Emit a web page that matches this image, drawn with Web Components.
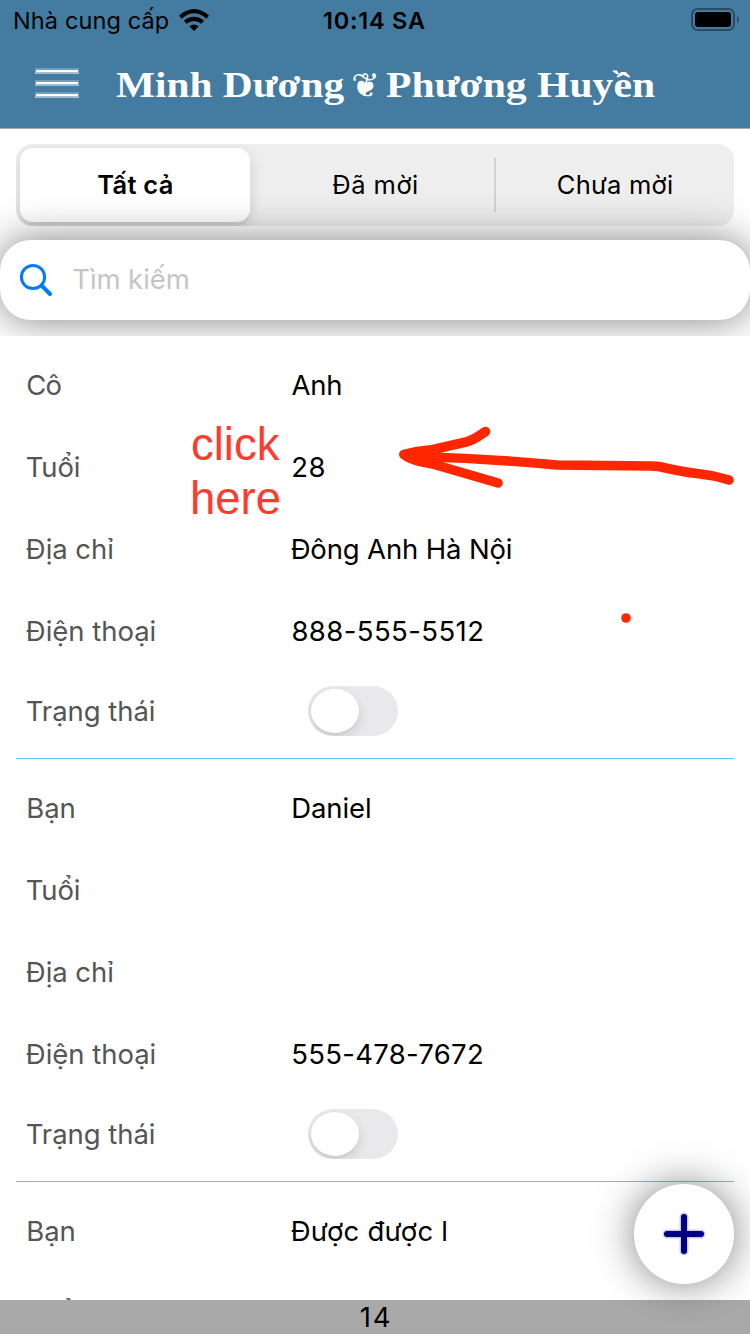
<!DOCTYPE html>
<html lang="vi">
<head>
<meta charset="utf-8">
<title>Minh Dương ❦ Phương Huyền</title>
<style>
html,body{margin:0;height:100%;overflow:hidden;background:#fff}
body{font-family:Inter,"Noto Sans",sans-serif;color:#000}
</style>
</head>
<body>
<guest-app></guest-app>
<script>
const define = (name, html) => {
  const tpl = document.createElement('template');
  tpl.innerHTML = html;
  customElements.define(name, class extends HTMLElement {
    connectedCallback() {
      if (this.shadowRoot) return;
      this.attachShadow({mode: 'open'}).append(tpl.content.cloneNode(true));
    }
  });
};
const pen = document.createElement('canvas').getContext('2d');

// Text whose visible ink spans the width given in "ink", by tracking or,
// with the "stretch" attribute, by horizontal scaling. "inset" moves its start.
const fit = el => {
  const cs = getComputedStyle(el);
  // Measured at ten times the size, since the bounds come in whole pixels.
  pen.font = `${cs.fontWeight} ${parseFloat(cs.fontSize) * 10}px ${cs.fontFamily}`;
  const text = el.textContent;
  const target = Number(el.getAttribute('ink'));
  const m = pen.measureText(text);
  const width = el.getBoundingClientRect().width;
  const left = -m.actualBoundingBoxLeft / 10;
  const right = (m.width - m.actualBoundingBoxRight) / 10;
  const ink = width - left - right;
  if (el.hasAttribute('stretch')) {
    const k = target / ink;
    el.style.transformOrigin = '0 50%';
    el.style.transform = `scaleX(${k})`;
    el.style.marginLeft = -left * k + 'px';
    el.style.marginRight = target + left * k - width + 'px';
    return;
  }
  const gap = (target - ink) / Math.max(1, [...text].length - 1);
  el.style.letterSpacing = gap + 'px';
  el.style.marginLeft = Number(el.getAttribute('inset')) - left + 'px';
  el.style.marginRight = -right - gap + 'px';
};
define('fit-text', `<style>:host{display:inline-block;justify-self:start;white-space:pre;line-height:1}</style><slot></slot>`);

define('status-bar', `<style>
:host{display:grid;grid-template-columns:324px 1fr auto;height:40px;align-items:center;font-size:23.500px}
.carrier{display:flex;align-items:center;padding-left:15px;gap:11px}
.time{font-weight:600;margin-top:1px}
.carrier fit-text{margin-top:1px}
svg{display:block}
.bat{margin-right:11px}
</style>
<div class="carrier"><fit-text ink="153">Nhà cung cấp</fit-text>
<svg width="30" height="23" viewBox="0 0 30 23"><g fill="none" stroke="#000" stroke-width="4.2"><path d="M1.4 8.2Q8 2.2 15 2.2T28.600 8.200"/><path d="M6.300 13.300Q10.200 9.800 15 9.800T23.700 13.300"/></g><path d="M15 22l-4.700-4.700Q15 13.500 19.700 17.300Z"/></svg></div>
<fit-text class="time" ink="100.5">10:14 SA</fit-text>
<svg class="bat" width="48" height="24" viewBox="0 0 48 24"><rect x="1" y="1" width="42" height="21" rx="5.500" fill="none" stroke="#2a4b61" stroke-width="2"/><rect x="4" y="4" width="36" height="15" rx="3"/><path d="M46 8v7q1.900-1 1.900-3.500T46 8" fill="#2a4b61"/></svg>`);

define('title-bar', `<style>
:host{display:flex;height:88px;align-items:center;color:#fff;font:bold 36px "Liberation Serif",serif}
.menu{display:block;width:46px;height:32px;margin-left:34px}
h1{font:inherit;margin:0 0 0 36.500px;padding-top:2px;display:flex;align-items:center}
.leaf{font:34px "DejaVu Sans",sans-serif;line-height:1;width:26px;margin:0 8.500px;display:flex;justify-content:center}
</style>
<svg class="menu" viewBox="0 0 46 32"><g fill="#fff"><path d="M1 0h44v4H1zM1 12h44v4H1zM1 24h44v4H1z" opacity=".25"/><path d="M1 4h44v2H1zM1 16h44v2H1zM1 28h44v2H1z" opacity=".5"/><path d="M2 2h42v2H2zM2 14h42v2H2zM2 26h42v2H2z"/></g></svg>
<h1><fit-text stretch ink="227.5">Minh Dương</fit-text><span class="leaf">❦</span><fit-text stretch ink="268">Phương Huyền</fit-text></h1>`);

define('segment-bar', `<style>
:host{display:grid;grid-template-columns:234px 1fr 240px;height:82px;margin:16px 16px 0;border-radius:16px;background:#eee;font-size:25.500px;overflow:hidden}
div{display:flex;align-items:center;justify-content:center}
.on{margin:4px 0 4px 4px;background:#fff;border-radius:13px;box-shadow:0 6px 16px rgba(0,0,0,.13),0 4px 2px rgba(0,0,0,.04);font-weight:600}
.mid{padding-left:6px}
.last{position:relative;padding-left:2px}
.last::before{content:"";position:absolute;left:0;top:14px;bottom:14px;width:2px;background:#d2d2d2}
</style>
<div class="on"><fit-text ink="73.5">Tất cả</fit-text></div>
<div class="mid"><fit-text ink="83.5">Đã mời</fit-text></div>
<div class="last"><fit-text ink="113.5">Chưa mời</fit-text></div>`);

define('search-box', `<style>
:host{display:flex;position:relative;align-items:center;height:80px;margin-top:14px;border-radius:31px;background:#fff;box-shadow:0 0 40px rgba(0,0,0,.5);font-size:27.500px;color:#c5c5c7}
svg{margin:0 20.500px 0 19px}
</style>
<svg width="34" height="34" viewBox="0 0 34 34" fill="none" stroke="#007aff" stroke-width="3"><circle cx="14" cy="14" r="11.600"/><path d="M22.500 22.500l8.500 8.500" stroke-width="4" stroke-linecap="round"/></svg>
<fit-text ink="114.5">Tìm kiếm</fit-text>`);

define('toggle-switch', `<style>
:host{display:block;width:90px;height:50px;border-radius:25px;background:#e9e9eb;overflow:hidden;margin-left:16px}
i{display:block;width:48px;height:44px;margin:3px;border-radius:50%;background:#fff;box-shadow:0 5px 12px rgba(0,0,0,.12),0 2px 2px rgba(0,0,0,.04)}
</style><i></i>`);

define('info-row', `<style>
:host{display:grid;grid-template-columns:265px 1fr;align-items:center;height:82px;padding-left:27px;font-size:27.500px}
:host([status]){height:78px}
.label{color:#555}
div{display:flex;align-items:center}
::slotted(fit-text){padding-top:2px}
</style><div class="label"><slot name="label"></slot></div><div><slot></slot></div>`);

define('guest-card', `<style>
:host{display:block;padding:8px 0;height:407px;position:relative}
hr{position:absolute;left:16px;right:16px;bottom:0;height:1px;margin:0;border:0;background:#5ac8fa}
</style><slot></slot><hr>`);

define('count-bar', `<style>
:host{display:flex;height:34px;background:#a9a9a9;align-items:center;justify-content:center;font-size:27.500px}
::slotted(fit-text){padding-top:2px}
</style><slot></slot>`);

define('add-button', `<style>
:host{display:flex;position:absolute;right:16px;bottom:50px;width:100px;height:100px;border-radius:50%;background:#fff;box-shadow:0 0 40px rgba(0,0,0,.5);align-items:center;justify-content:center}
</style><svg width="44" height="44" viewBox="0 0 44 44" stroke-linecap="round"><path d="M22 5v34M5 22h34" stroke="#ccccea" stroke-width="9"/><path d="M22 5v34M5 22h34" stroke="#000080" stroke-width="6"/></svg>`);

// Hand-drawn annotations that float over the guest list.
define('markup-layer', `<style>
:host{display:block;position:absolute;inset:0;pointer-events:none;color:#ff3b30;font:45.500px/54px "Liberation Sans",sans-serif}
svg{position:absolute;inset:0}
p{position:absolute;left:190px;top:418px;margin:0;display:grid}
p span:first-child{margin-left:1px}
</style>
<p><span>click</span><span>here</span></p>
<svg width="750" height="1334" viewBox="0 0 750 1334" fill="none" stroke="#ff2600" stroke-linecap="round" stroke-linejoin="round">
<path stroke-width="9.600" d="M729 480Q713 475 697 473.500Q680 471.500 659 466.500Q656 466 650 466L557 465Q530 462.500 500 460.500Q465 458 430 457L404 454.500Q416 451 433 449.500L466 442Q473 440.500 485.500 431.500"/>
<path stroke-width="9.600" d="M404 454.500Q409 459 420 461.500Q432 463.500 443 467L498 483"/>
<path d="M404 454.500L434 451V460Z" fill="#ff2600"/><circle cx="626" cy="618" r="4.800" fill="#ff2600" stroke="none"/></svg>`);

define('guest-app', `<style>
:host{display:flex;flex-direction:column;position:relative;width:750px;height:1334px;overflow:hidden;background:#fff}
header{background:#447ba1;border-bottom:1px solid #aaa;height:128px}
.tools{height:207px;overflow:hidden}
segment-bar{margin-top:15px}
main{flex:1;overflow:hidden;background:#fff}
</style>
<header><status-bar></status-bar><title-bar></title-bar></header>
<div class="tools"><segment-bar></segment-bar><search-box></search-box></div>
<main>
<guest-card>
<info-row><fit-text slot="label" inset=".5" ink="33.5">Cô</fit-text><fit-text ink="48.5">Anh</fit-text></info-row>
<info-row><fit-text slot="label" ink="52">Tuổi</fit-text><fit-text inset="1" ink="31">28</fit-text></info-row>
<info-row><fit-text slot="label" inset="-.3" ink="86.5">Địa chỉ</fit-text><fit-text inset="-.5" ink="219.5">Đông Anh Hà Nội</fit-text></info-row>
<info-row><fit-text slot="label" inset="-.3" ink="128">Điện thoại</fit-text><fit-text inset=".7" ink="189.5">888-555-5512</fit-text></info-row>
<info-row status><fit-text slot="label" ink="127">Trạng thái</fit-text><toggle-switch></toggle-switch></info-row>
</guest-card>
<guest-card>
<info-row><fit-text slot="label" inset="1.3" ink="45.5">Bạn</fit-text><fit-text inset="1.3" ink="76.5">Daniel</fit-text></info-row>
<info-row><fit-text slot="label" ink="52">Tuổi</fit-text></info-row>
<info-row><fit-text slot="label" inset="-.3" ink="86.5">Địa chỉ</fit-text></info-row>
<info-row><fit-text slot="label" inset="-.3" ink="128">Điện thoại</fit-text><fit-text inset="1" ink="189">555-478-7672</fit-text></info-row>
<info-row status><fit-text slot="label" ink="127">Trạng thái</fit-text><toggle-switch></toggle-switch></info-row>
</guest-card>
<guest-card>
<info-row><fit-text slot="label" inset="1.3" ink="45.5">Bạn</fit-text><fit-text inset="-.5" ink="154.5">Được được l</fit-text></info-row>
<info-row><fit-text slot="label" ink="52">Tuổi</fit-text></info-row>
</guest-card>
</main>
<count-bar><fit-text ink="28">14</fit-text></count-bar>
<add-button></add-button>
<markup-layer></markup-layer>`);

const fitAll = root => {
  for (const el of root.querySelectorAll('*')) {
    if (el.localName === 'fit-text') fit(el);
    else if (el.shadowRoot) fitAll(el.shadowRoot);
  }
};
fitAll(document);
</script>
</body>
</html>
